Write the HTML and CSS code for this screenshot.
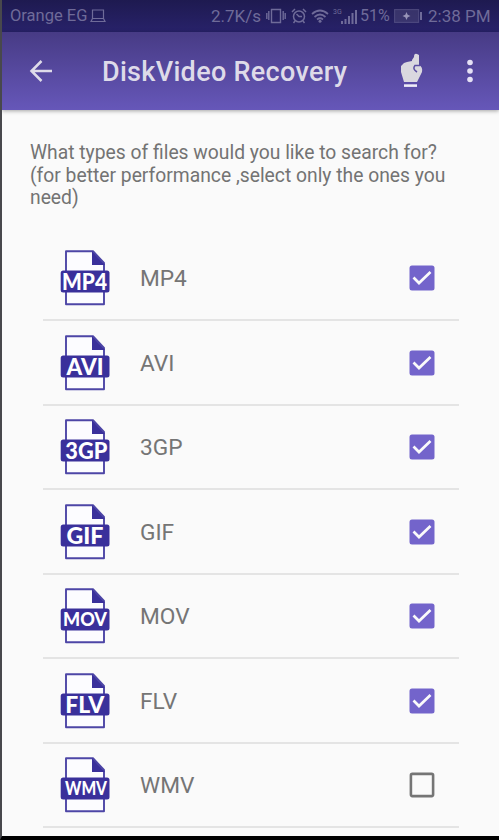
FILE: index.html
```html
<!DOCTYPE html>
<html lang="en">
<head>
<meta charset="utf-8">
<title>DiskVideo Recovery</title>
<link rel="stylesheet" href="styles.css">
</head>
<body>
<svg class="defs" width="0" height="0" aria-hidden="true">
  <symbol id="file" viewBox="0 0 50 56">
    <path d="M6 1.2H33L44 13V54.3H6Z" fill="#fcfcff" stroke="#4d46a6" stroke-width="1.9" stroke-linejoin="round"/>
    <path d="M32 1L45 15H32Z" fill="#3a309b"/>
    <rect x=".7" y="20.5" width="48.8" height="22" rx="2.5" fill="#3a309b"/>
  </symbol>
  <symbol id="checked" viewBox="0 0 26 26">
    <rect x=".5" y=".5" width="25" height="25" rx="2.5" fill="#7364cb"/>
    <path d="M4.5 12.5L10 18L21.5 7" fill="none" stroke="#fafafa" stroke-width="2.7"/>
  </symbol>
  <symbol id="unchecked" viewBox="0 0 26 26">
    <rect x="1.9" y="1.9" width="22.2" height="22.2" rx="1.5" fill="none" stroke="#757575" stroke-width="2.6"/>
  </symbol>
</svg>
<div class="screen">
  <header class="status">
    <span class="carrier">Orange EG</span>
    <svg class="laptop" width="16" height="14" viewBox="0 0 16 14"><path d="M2.5 1H13.5V9.5H2.5ZM2.5 9.5L1 12.5H15L13.5 9.5" fill="none" stroke="currentColor" stroke-width="1.2"/></svg>
    <span class="speed">2.7K/s</span>
    <svg class="vibrate" width="20" height="16" viewBox="0 0 20 16"><path d="M5.500 1.500H14.500V14.500H5.500ZM2.800 3V12M17.200 3V12M.8 5V11M19.200 5V11" fill="none" stroke="currentColor" stroke-width="1.400"/></svg>
    <svg class="alarm" width="16" height="16" viewBox="0 0 16 16"><g fill="none" stroke="currentColor" stroke-width="1.5"><circle cx="8" cy="8.5" r="5.5"/><path d="M1 4L4 1M12 1L15 4M5.5 6L8 8.5H11M4 13L2.5 15M12 13L13.500 15"/></g></svg>
    <svg class="wifi" width="18" height="14" viewBox="0 0 18 14"><g fill="none" stroke="currentColor" stroke-width="1.7"><path d="M1 5Q9-2 17 5M3.500 8Q9 3 14.500 8M6 10.500Q9 8 12 10.500"/></g><circle cx="9" cy="12.300" r="1.500" fill="currentColor"/></svg>
    <svg class="signal" width="25" height="17" viewBox="0 0 25 17"><text x="0" y="6" class="net">3G</text><path d="M9 16V13M12.500 16V11M16 16V8M19.500 16V5M23 16V2" stroke="currentColor" stroke-width="2" fill="none"/></svg>
    <span class="percent">51%</span>
    <svg class="battery" width="29" height="14" viewBox="0 0 29 14"><rect x=".6" y=".6" width="24" height="12.800" fill="#4b4679" stroke="currentColor" stroke-width="1.100" opacity=".55"/><path d="M27 3V11" stroke="currentColor" stroke-width="2"/><path d="M12.500 3L13.700 5.800L16.500 7L13.700 8.200L12.500 11L11.300 8.200L8.500 7L11.300 5.800Z" fill="#9894b8"/></svg>
    <span class="clock">2:38 PM</span>
  </header>
  <div class="appbar">
    <svg class="back" width="24" height="24" viewBox="0 0 24 24"><path d="M24 12H4M13.500 2L3.500 12L13.500 22" fill="none" stroke="#dedbe9" stroke-width="2.500"/></svg>
    <h1 class="title"><svg width="246" height="36"><text x="0" y="28" textLength="245">DiskVideo Recovery</text></svg></h1>
    <svg class="hand" width="24" height="36" viewBox="0 0 24 36"><path d="M12 7L14 4Q14 0 17 1L19 2V12Q23 14 22 19L17 29H4L1 19V13L4 10L7 9L12 8Z" fill="#dad8df"/><path d="M20 12.500L15 12.500Q12 16 17 19" fill="none" stroke="#5c4fa3" stroke-width="1.600"/><path d="M4 32.600H17" stroke="#efedf8" stroke-width="2.600"/></svg>
    <svg class="more" width="8" height="24" viewBox="0 0 8 24" fill="#e5e1f5"><circle cx="4" cy="3.500" r="2.800"/><circle cx="4" cy="12" r="2.800"/><circle cx="4" cy="20.500" r="2.800"/></svg>
  </div>
  <main class="content">
    <p class="question">What types of files would you like to search for?<br>(for better performance ,select only the ones you<br>need)</p>
    <ul class="types">
      <li class="row"><svg class="icon" viewBox="0 0 50 56"><use href="#file"/><text x="24.500" y="39.500" textLength="45" lengthAdjust="spacingAndGlyphs">MP4</text></svg><span class="name">MP4</span><svg class="box"><use href="#checked"/></svg></li>
      <li class="row"><svg class="icon" viewBox="0 0 50 56"><use href="#file"/><text x="25" y="39.500" textLength="37" lengthAdjust="spacingAndGlyphs">AVI</text></svg><span class="name">AVI</span><svg class="box"><use href="#checked"/></svg></li>
      <li class="row"><svg class="icon" viewBox="0 0 50 56"><use href="#file"/><text x="26.300" y="39.500" textLength="42" lengthAdjust="spacingAndGlyphs">3GP</text></svg><span class="name">3GP</span><svg class="box"><use href="#checked"/></svg></li>
      <li class="row"><svg class="icon" viewBox="0 0 50 56"><use href="#file"/><text x="25" y="39.500" textLength="37" lengthAdjust="spacingAndGlyphs">GIF</text></svg><span class="name">GIF</span><svg class="box"><use href="#checked"/></svg></li>
      <li class="row"><svg class="icon" viewBox="0 0 50 56"><use href="#file"/><text class="small" x="25" y="37.500" textLength="44" lengthAdjust="spacingAndGlyphs">MOV</text></svg><span class="name">MOV</span><svg class="box"><use href="#checked"/></svg></li>
      <li class="row"><svg class="icon" viewBox="0 0 50 56"><use href="#file"/><text x="24.700" y="39.500" textLength="39" lengthAdjust="spacingAndGlyphs">FLV</text></svg><span class="name">FLV</span><svg class="box"><use href="#checked"/></svg></li>
      <li class="row"><svg class="icon" viewBox="0 0 50 56"><use href="#file"/><text class="small" x="26" y="37.500" textLength="42" lengthAdjust="spacingAndGlyphs">WMV</text></svg><span class="name">WMV</span><svg class="box"><use href="#unchecked"/></svg></li>
    </ul>
  </main>
</div>
</body>
</html>
```
FILE: styles.css
```css
* { box-sizing: border-box; }
body { margin: 0; font-family: Roboto, sans-serif; background: #fafafa; }
svg { flex: none; display: block; }
.defs { position: absolute; }
.screen {
  height: 840px;
  overflow: hidden;
  display: flex;
  flex-direction: column;
  border-left: 2px solid #48484c;
  border-bottom: 4px solid #000;
}
.status {
  flex: none;
  height: 32px;
  display: flex;
  align-items: center;
  padding-left: 8px;
  font-size: 16px;
  line-height: 32px;
  white-space: nowrap;
  color: #6f6b99;
  background: linear-gradient(#1e1a50, #28226a);
}
.carrier { width: 80px; font-size: 16.5px; }
.laptop { margin-right: 105px; }
.speed { width: 55px; font-size: 17px; }
.alarm { margin-left: 5px; }
.wifi { margin-left: 4px; }
.signal { margin-left: 4px; }
.net { font-size: 7px; fill: currentColor; }
.percent { width: 34px; margin-left: 2px; }
.battery { margin-right: 5px; }
.clock { font-size: 17px; }
.appbar {
  flex: none;
  position: relative;
  height: 78px;
  display: flex;
  align-items: center;
  padding-left: 26px;
  background: linear-gradient(#473b85, #6657b9);
  box-shadow: 0 1px 4px rgba(0, 0, 0, .35);
}
.title { margin: 0 0 0 50px; font-size: 27px; font-weight: 500; line-height: 36px; }
.title text { fill: #dedbe9; }
.hand { margin-left: 52px; }
.more { margin-left: 42px; }
.content { padding: 32px 0 0; }
.question {
  margin: 0 0 27px 28px;
  font-size: 19.300px;
  line-height: 22.500px;
  color: #737373;
  white-space: nowrap;
}
.types { list-style: none; margin: 0 40px 0 41px; padding: 0; }
.row {
  height: 84.500px;
  display: flex;
  align-items: center;
  padding: 1px 24px 0 17px;
  border-bottom: 2px solid #e4e4e4;
}
.icon { width: 50px; height: 56px; }
.icon text {
  font: 900 22px Lato, sans-serif;
  fill: #fff;
  text-anchor: middle;
}
.icon .small { font-size: 18px; }
.name { flex: 1; margin-left: 30px; padding-top: 1px; font-size: 22.700px; color: #757575; }
.box { width: 26px; height: 26px; }
```
